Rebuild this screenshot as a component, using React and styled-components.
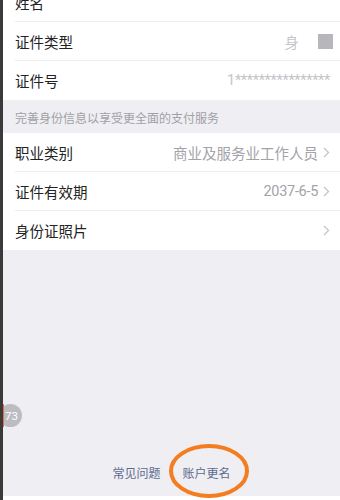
import styled, { createGlobalStyle } from "styled-components";

const GlobalStyle = createGlobalStyle`
  html, body {
    margin: 0;
    padding: 0;
    background: #efeef3;
  }
  body {
    font-family: "Noto Sans CJK SC", "Noto Sans", sans-serif;
  }
`;

const Frame = styled.div`
  display: flex;
  width: 340px;
  height: 500px;
  overflow: hidden;
  position: relative;
`;

const EdgeBar = styled.div`
  width: 3px;
  flex-shrink: 0;
  background: #3a3a3a;
  position: relative;
  z-index: 2;
`;

const Main = styled.div`
  flex: 1;
  display: flex;
  flex-direction: column;
  background: #efeef3;
`;

const Group = styled.div`
  background: #fff;
  margin-top: ${(p) => p.$offset || 0}px;
`;

const Row = styled.div`
  height: 39px;
  display: flex;
  align-items: center;
  padding-left: 12px;
`;

const RowInner = styled.div`
  flex: 1;
  height: 100%;
  display: flex;
  align-items: center;
  padding-right: 10px;
  border-bottom: ${(p) => (p.$last ? "none" : "1px solid #ececee")};
  box-sizing: border-box;
`;

const Label = styled.span`
  font-size: 14.5px;
  color: #222;
  flex: 1;
`;

const Value = styled.span`
  font-size: 14.5px;
  color: ${(p) => (p.$faint ? "#c4c4c8" : "#a3a3a8")};
  font-family: ${(p) =>
    p.$digits ? '"Roboto", "Noto Sans CJK SC", sans-serif' : "inherit"};
  letter-spacing: ${(p) => (p.$digits ? "-0.3px" : "0")};
`;

const Chevron = styled.svg`
  width: 7px;
  height: 11px;
  margin-left: 5px;
  flex-shrink: 0;
`;

const Mask = styled.div`
  width: 15px;
  height: 15px;
  background: #b7b6bb;
  margin-left: 19px;
  margin-right: -3px;
`;

const SectionHeader = styled.div`
  height: 33px;
  display: flex;
  align-items: center;
  padding: 2px 0 0 12px;
  box-sizing: border-box;
  font-size: 12px;
  color: #a0a0a6;
`;

const Spacer = styled.div`
  flex: 1;
`;

const Footer = styled.div`
  display: flex;
  justify-content: center;
  gap: 22px;
  padding-bottom: 15px;
`;

const Link = styled.span`
  font-size: 12px;
  color: #5d6b8e;
  position: relative;
`;

const Circle = styled.svg`
  position: absolute;
  left: -16px;
  top: -22px;
  width: 84px;
  height: 58px;
  pointer-events: none;
`;

const BottomStrip = styled.div`
  height: 4px;
  background: #fff;
`;

const Badge = styled.div`
  position: absolute;
  left: -1px;
  top: 404px;
  width: 23px;
  height: 23px;
  border-radius: 50%;
  background: #bdbcc1;
  color: #fff;
  font-family: "Roboto", sans-serif;
  font-size: 11.5px;
  display: flex;
  align-items: center;
  justify-content: center;
  padding-left: 2px;
  box-sizing: border-box;
  z-index: 1;
  &::before {
    content: "";
    position: absolute;
    left: 3px;
    top: 0;
    width: 1.5px;
    height: 23px;
    background: #e0704a;
  }
`;

const Arrow = () => (
  <Chevron viewBox="0 0 7 11">
    <path d="M1 1l4.5 4.5L1 10" fill="none" stroke="#c4c4c8" strokeWidth="1.3" />
  </Chevron>
);

export default function App() {
  return (
    <>
      <GlobalStyle />
      <Frame>
        <EdgeBar />
        <Main>
          <Group $offset={-17}>
            <Row>
              <RowInner>
                <Label>姓名</Label>
              </RowInner>
            </Row>
            <Row>
              <RowInner>
                <Label>证件类型</Label>
                <Value $faint>身</Value>
                <Mask />
              </RowInner>
            </Row>
            <Row>
              <RowInner $last>
                <Label>证件号</Label>
                <Value $faint $digits>1****************</Value>
              </RowInner>
            </Row>
          </Group>
          <SectionHeader>完善身份信息以享受更全面的支付服务</SectionHeader>
          <Group>
            <Row>
              <RowInner>
                <Label>职业类别</Label>
                <Value>商业及服务业工作人员</Value>
                <Arrow />
              </RowInner>
            </Row>
            <Row>
              <RowInner>
                <Label>证件有效期</Label>
                <Value $digits>2037-6-5</Value>
                <Arrow />
              </RowInner>
            </Row>
            <Row>
              <RowInner $last>
                <Label>身份证照片</Label>
                <Arrow />
              </RowInner>
            </Row>
          </Group>
          <Spacer />
          <Footer>
            <Link>常见问题</Link>
            <Link>
              账户更名
              <Circle viewBox="0 0 84 58">
                <ellipse cx="42" cy="29" rx="38" ry="25" fill="none" stroke="#f47d20" strokeWidth="4" />
              </Circle>
            </Link>
          </Footer>
          <BottomStrip />
        </Main>
        <Badge>73</Badge>
      </Frame>
    </>
  );
}
